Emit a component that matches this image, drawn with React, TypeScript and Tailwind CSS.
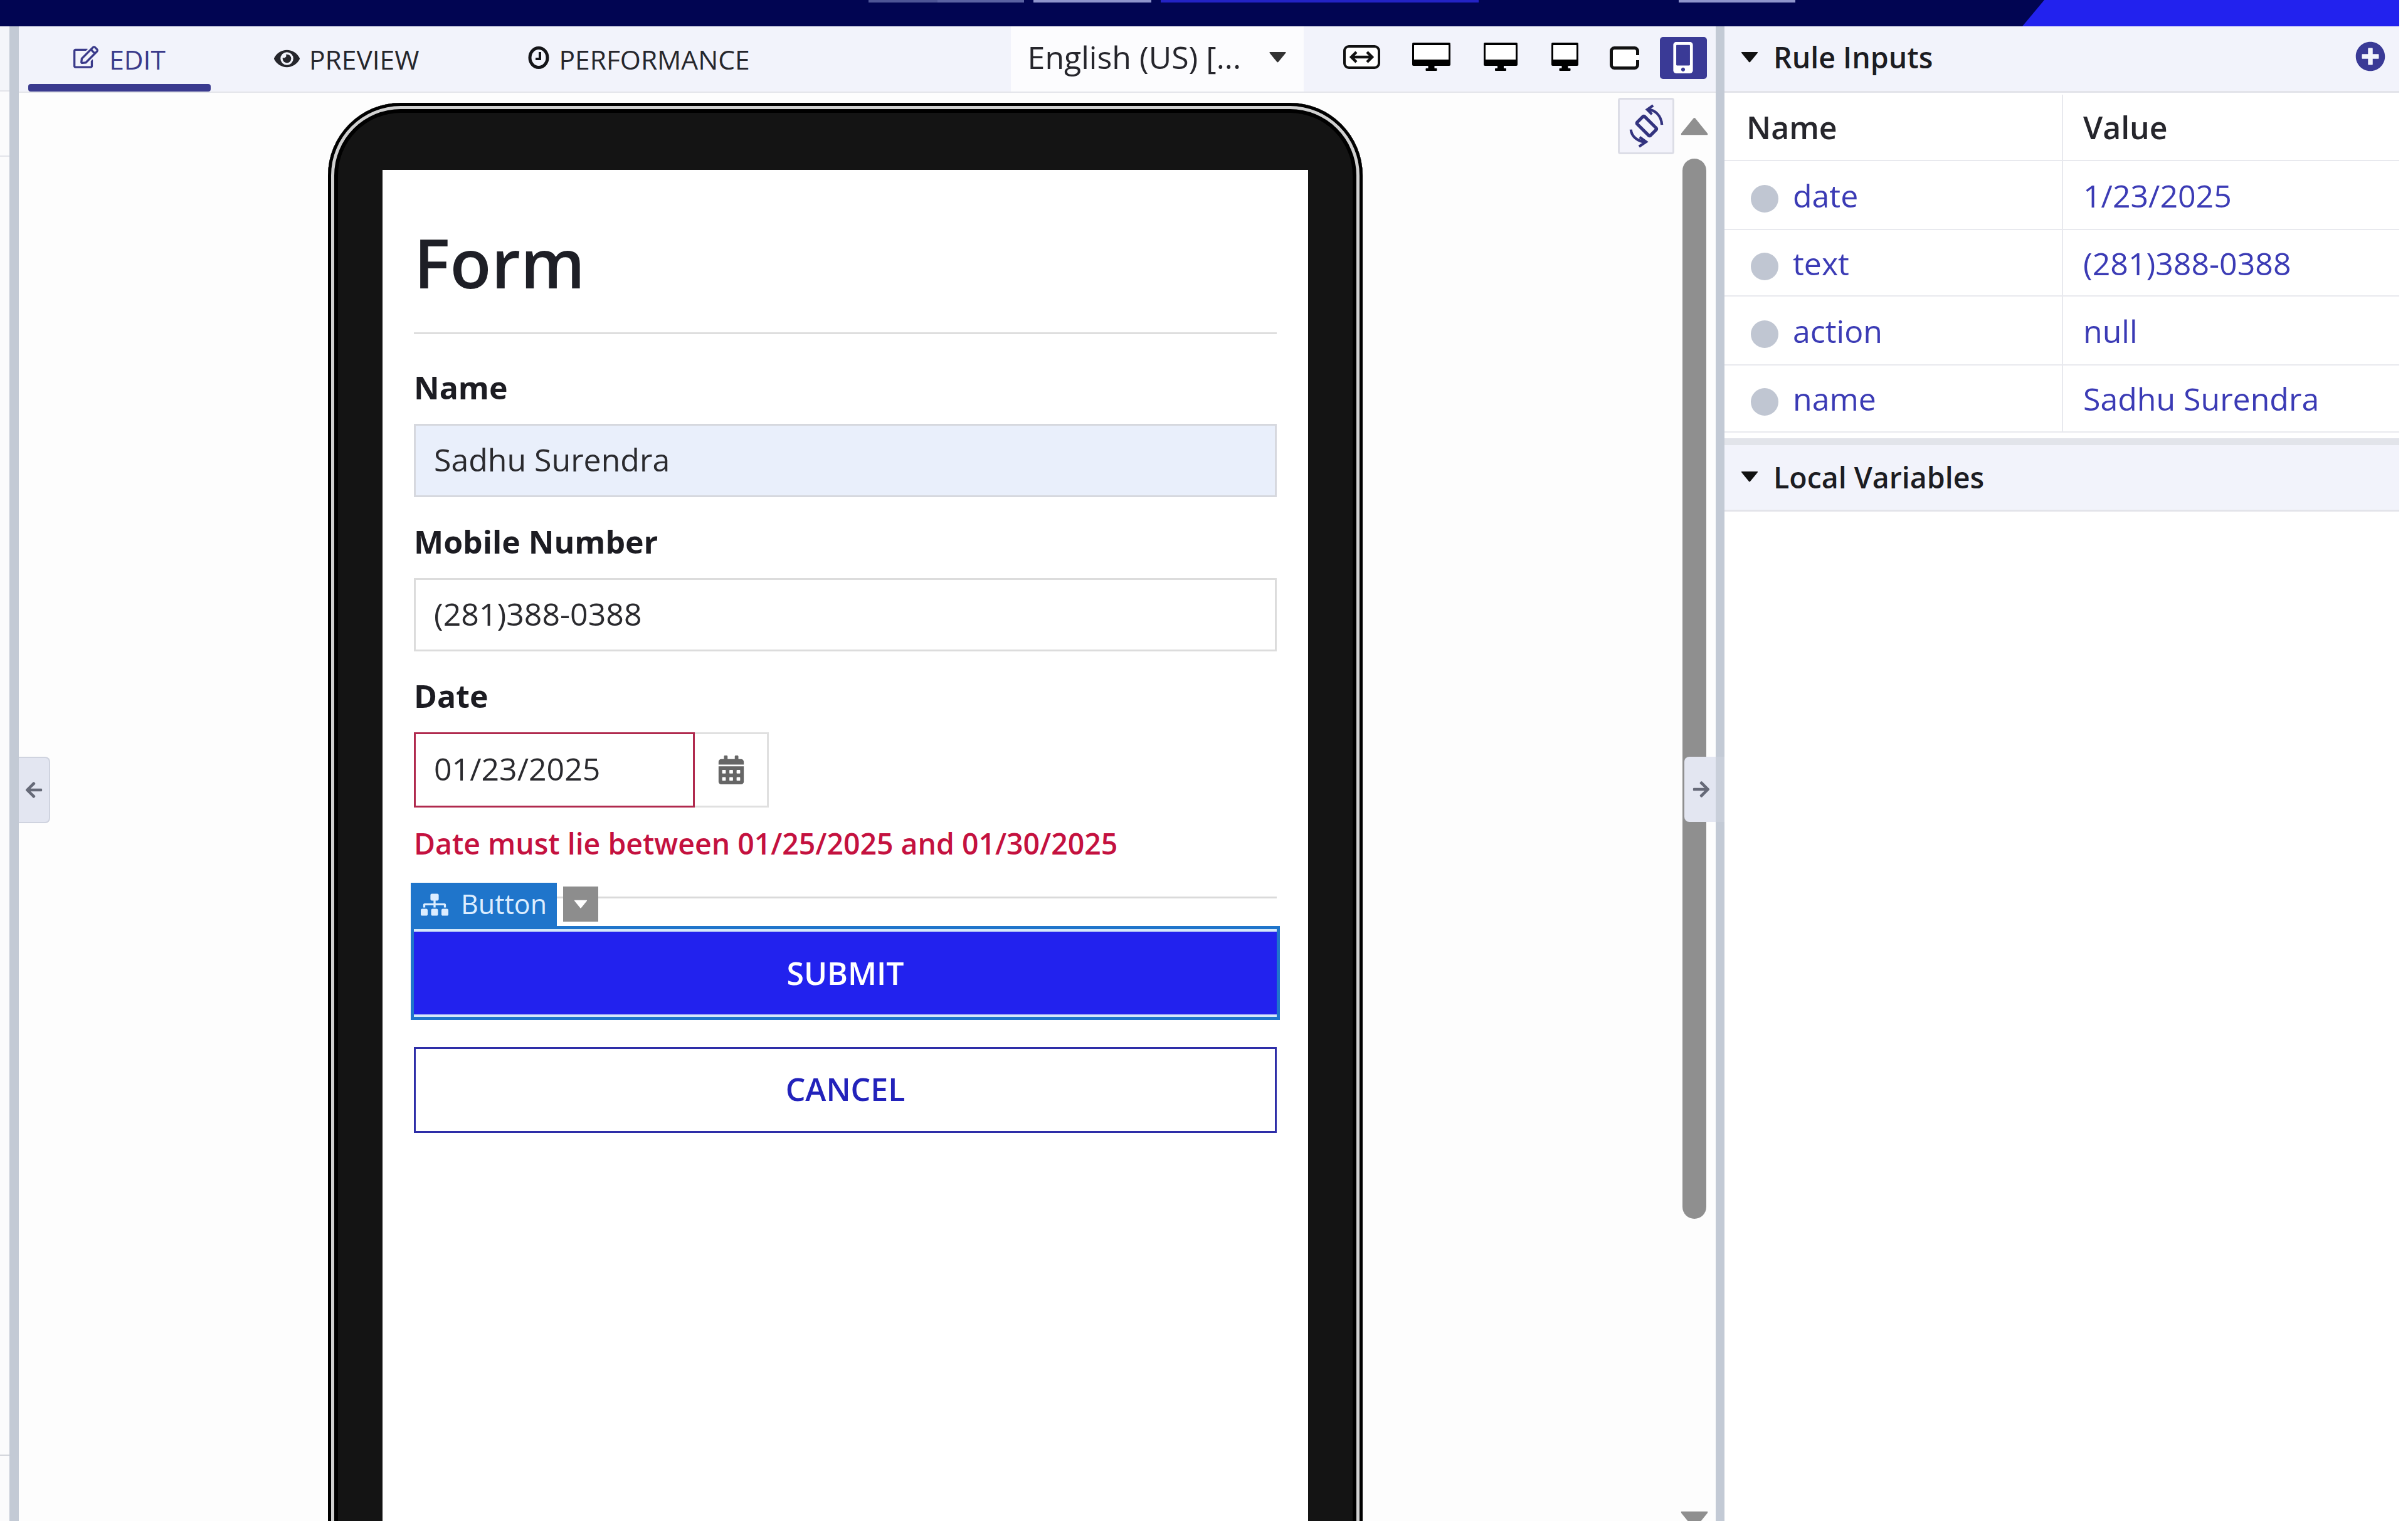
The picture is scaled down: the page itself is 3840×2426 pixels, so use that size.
import { FaArrowLeft, FaArrowRight, FaCalendarAlt, FaEye, FaMobileAlt, FaPlusCircle, FaRegEdit, FaSitemap } from "react-icons/fa";

const ruleInputs = [
	{ name: "date", value: "1/23/2025", height: "h-[110px]" },
	{ name: "text", value: "(281)388-0388", height: "h-[106px]" },
	{ name: "action", value: "null", height: "h-[110px]" },
	{ name: "name", value: "Sadhu Surendra", height: "h-[107px]" },
];

function Triangle({ className, down = true }: { className: string; down?: boolean }) {
	return (
		<svg viewBox="0 0 30 20" className={className} fill="currentColor">
			{down ? (
				<path d="M1 1 H29 Q30 1 29 3 L16 19 Q15 20 14 19 L1 3 Q0 1 1 1 Z" />
			) : (
				<path d="M1 19 H29 Q30 19 29 17 L16 1 Q15 0 14 1 L1 17 Q0 19 1 19 Z" />
			)}
		</svg>
	);
}

function Monitor({ width }: { width: number }) {
	const mid = width / 2;
	return (
		<svg viewBox={`0 0 ${width} 45`} width={width} height={45} className="-mt-[3px]">
			<rect x="1.5" y="1.5" width={width - 3} height="32" rx="3" fill="#fff" stroke="#000" strokeWidth="3" />
			<rect x="0" y="0" width={width} height="4" rx="2" fill="#000" />
			<rect x="0" y="27" width={width} height="10" rx="2" fill="#000" />
			<rect x={mid - 5} y="36" width="10" height="5" fill="#000" />
			<rect x={mid - 9} y="41" width="18" height="4" rx="1" fill="#000" />
		</svg>
	);
}

function LabelRow({ children, className = "" }: { children: string; className?: string }) {
	return <div className={`flex h-[60px] items-center text-[50px] font-bold text-[#1c1c22] ${className}`}>{children}</div>;
}

function PanelHeader({ title, className = "", children }: { title: string; className?: string; children?: React.ReactNode }) {
	return (
		<div className={`flex h-[106px] items-center border-b-[3px] border-[#e3e4ea] bg-[#f2f3fb] pr-[22px] pl-[25px] text-[#1c1c22] ${className}`}>
			<Triangle className="-mt-[6px] h-[18px] w-[30px] text-[#111]" />
			<span className="-mt-[3px] ml-[23px] text-[46.5px] font-semibold">{title}</span>
			{children}
		</div>
	);
}

export default function App() {
	return (
		<div className="flex h-[2426px] w-[3840px] flex-col overflow-hidden bg-white font-['Open_Sans',sans-serif]">
			{/* top nav, only its bottom edge is in the crop */}
			<div className="flex h-[42px] shrink-0">
				<div className="flex flex-1 items-start bg-[#010552]">
					<div className="ml-[1385px] h-[4px] w-[110px] bg-[#4d5596]" />
					<div className="h-[4px] w-[138px] bg-[#5a62a2]" />
					<div className="ml-[15px] h-[4px] w-[188px] bg-[#8f95cc]" />
					<div className="ml-[15px] h-[4px] w-[507px] bg-[#2323c4]" />
					<div className="ml-[319px] h-[4px] w-[186px] bg-[#8f95cc]" />
				</div>
				<svg viewBox="0 0 35 42" className="h-[42px] w-[35px] shrink-0 bg-[#010552]" preserveAspectRatio="none">
					<path d="M35 0 L0 42 H35 Z" fill="#2222ee" />
				</svg>
				<div className="w-[566px] bg-[#2222ee]" />
				<div className="w-[14px] bg-white" />
			</div>

			<div className="flex min-h-0 flex-1">
				<div className="flex w-[15px] shrink-0 flex-col bg-[#fbfbfc]">
					<div className="h-[104px] border-b-[2px] border-[#e3e4ea] bg-[#f4f5fa]" />
					<div className="h-[104px] border-b-[2px] border-[#e3e4ea]" />
					<div className="mt-[2070px] border-b-[2px] border-[#d4d6dc]" />
				</div>
				<div className="w-[15px] shrink-0 bg-[#c3cad5]" />

				{/* designer canvas */}
				<div className="flex w-[2706px] shrink-0 flex-col">
					<div className="flex h-[106px] shrink-0 items-stretch border-b-[2px] border-[#e4e5ea] bg-[#f2f3fb] text-[42.5px]">
						<div className="relative ml-[15px] flex w-[291px] items-center justify-center gap-[17px] pt-[6px] pb-[4px] text-[#3a3a8a]">
							<FaRegEdit className="-mt-[8px] size-[40px]" />
							<span>EDIT</span>
							<div className="absolute inset-x-0 bottom-0 h-[12px] rounded-[4px] bg-[#3a3a8f]" />
						</div>
						<div className="ml-[101px] flex items-center gap-[15px] pt-[6px] pb-[4px] text-[#26262c]">
							<FaEye className="-mt-[4px] size-[41px]" />
							<span>PREVIEW</span>
						</div>
						<div className="ml-[174px] flex items-center gap-[15px] pt-[6px] pb-[4px] text-[#26262c]">
							<svg viewBox="0 0 34 36" width={34} height={36} className="-mt-[6px]" fill="none" stroke="#141418">
								<ellipse cx="17" cy="18" rx="14" ry="15.5" strokeWidth="5" />
								<path d="M19 9 V20 H12" strokeWidth="4" />
							</svg>
							<span>PERFORMANCE</span>
						</div>
						<div className="ml-[416px] flex w-[467px] items-center bg-[#fcfcfe] pb-[6px] pl-[27px] text-[50px] text-[#26262c]">
							<span>English (US) [...</span>
							<Triangle className="ml-[44px] h-[18px] w-[29px] text-[#333]" />
						</div>
						<div className="flex items-center pb-[4px]">
							<svg viewBox="0 0 59 38" width={59} height={38} className="ml-[63px] -mt-[3px]">
								<rect x="2" y="2" width="55" height="34" rx="7" fill="#fff" stroke="#111" strokeWidth="4" />
								<path d="M14 19 H45 M21 11 L13 19 L21 27 M38 11 L46 19 L38 27" fill="none" stroke="#111" strokeWidth="4.5" />
							</svg>
							<div className="ml-[51px]"><Monitor width={61} /></div>
							<div className="ml-[53px]"><Monitor width={54} /></div>
							<div className="ml-[54px]"><Monitor width={43} /></div>
							<svg viewBox="0 0 47 37" width={47} height={37} className="ml-[50px]">
								<rect x="2.5" y="2.5" width="42" height="32" rx="5" fill="#fff" stroke="#111" strokeWidth="5" />
								<rect x="42" y="14" width="5" height="8" fill="#fff" />
							</svg>
							<div className="ml-[33px] flex h-[67px] w-[75px] items-center justify-center rounded-[5px] bg-[#3a3a96] text-white">
								<FaMobileAlt className="size-[50px]" />
							</div>
						</div>
					</div>

					<div className="relative flex min-h-0 flex-1 bg-[#fdfdfd]">
						<div className="min-w-0 flex-1 pt-[16px] pl-[493px]">
							{/* device frame */}
							<div className="h-[2400px] w-[1650px] rounded-t-[116px] bg-[#141414] px-[87px] pt-[107px] shadow-[inset_0_0_0_5px_#000,inset_0_0_0_10px_#d0d0d0,inset_0_0_0_16px_#000]">
								<div className="h-full bg-white px-[50px] text-[#2a2a2e]">
									<div className="h-[262px] border-b-[3px] border-[#dedede] pt-[94px] text-[108px] leading-none font-semibold text-[#1e1f26]">
										Form
									</div>
									<LabelRow className="mt-[55px] mb-[28px]">Name</LabelRow>
									<div className="flex h-[117px] items-center border-[3px] border-[#d6d8de] bg-[#e9effb] pb-[3px] pl-[29px] text-[50px]">
										Sadhu Surendra
									</div>
									<LabelRow className="mt-[41px] mb-[28px]">Mobile Number</LabelRow>
									<div className="flex h-[117px] items-center border-[3px] border-[#dcdcdc] bg-white pb-[3px] pl-[29px] text-[50px]">
										(281)388-0388
									</div>
									<LabelRow className="mt-[41px] mb-[28px]">Date</LabelRow>
									<div className="flex h-[120px]">
										<div className="flex w-[448px] items-center border-[3px] border-[#b02a4e] pb-[3px] pl-[29px] text-[50px]">
											01/23/2025
										</div>
										<div className="flex w-[118px] items-center justify-center border-y-[3px] border-r-[3px] border-[#e0e0e0] text-[#666]">
											<FaCalendarAlt className="size-[46px]" />
										</div>
									</div>
									<div className="mt-[28px] flex h-[60px] items-center text-[46.4px] font-semibold text-[#c4113f]">
										Date must lie between 01/25/2025 and 01/30/2025
									</div>

									<div className="mt-[32px] -ml-[5px] flex h-[69px] items-start">
										<div className="flex h-full w-[233px] items-center gap-[20px] bg-[#1f75cb] pl-[16px] text-[43px] text-[#dcedff]">
											<FaSitemap className="size-[44px]" />
											<span>Button</span>
										</div>
										<div className="mt-[22px] h-[3px] w-[10px] bg-[#dadada]" />
										<div className="mt-[6px] flex h-[56px] w-[56px] items-center justify-center bg-[#8d8d8d]">
											<Triangle className="h-[14px] w-[24px] text-white" />
										</div>
										<div className="mt-[22px] h-[3px] flex-1 bg-[#dadada]" />
									</div>

									<div className="-mx-[5px] h-[150px] border-[5px] border-[#1f75cb]">
										<div className="flex h-full items-center justify-center border-y-[4px] border-[#d5e8f9] bg-[#2222ee] text-[50px] font-semibold text-white">
											SUBMIT
										</div>
									</div>
									<div className="mt-[43px] flex h-[137px] items-center justify-center border-[3px] border-[#2e2ea8] bg-white pb-[2px] text-[50px] font-semibold text-[#2222bb]">
										CANCEL
									</div>
								</div>
							</div>
						</div>

						{/* scrollbar */}
						<div className="mr-[12px] flex w-[44px] shrink-0 flex-col items-center pt-[39px] text-[#8f8f8f]">
							<Triangle down={false} className="h-[30px] w-[44px]" />
							<div className="mt-[36px] h-[1691px] w-[38px] shrink-0 rounded-[19px] bg-[#8f8f8f]" />
							<div className="flex-1" />
							<Triangle className="-mb-[13px] h-[30px] w-[44px] shrink-0" />
						</div>

						<div className="absolute top-[8px] left-[2550px] flex size-[90px] items-center justify-center rounded-[4px] border-[3px] border-[#dcdde6] bg-[#f3f3fb]">
							<svg viewBox="0 0 90 92" className="size-[86px]" fill="none" stroke="#33337f">
								<rect x="37" y="30" width="18" height="32" rx="2" transform="rotate(-45 46 46)" strokeWidth="5.5" />
								<path d="M48 18 C60 18 71 28 72 44 M57 11 L47 18 L55 26 M45 74 C30 72 20 64 19 52 M34 65 L45 73 L33 81" strokeWidth="4.5" />
							</svg>
						</div>

						<div className="absolute top-[1059px] left-0 flex h-[106px] w-[50px] items-center justify-center rounded-r-[8px] border-y-[2px] border-r-[2px] border-[#cfd3df] bg-[#e3e6f1] text-[#666a78]">
							<FaArrowLeft className="size-[30px]" />
						</div>
						<div className="absolute top-[1059px] right-0 flex h-[104px] w-[50px] items-center rounded-l-[8px] bg-[#e3e6f1] pl-[12px] text-[#666a78]">
							<FaArrowRight className="size-[30px]" />
							<div className="absolute top-0 left-full h-full w-[14px] bg-[#e3e6f1]/20" />
						</div>
					</div>
				</div>

				<div className="w-[14px] shrink-0 bg-[#c3cad5]" />

				{/* rule inputs panel */}
				<div className="flex w-[1076px] shrink-0 flex-col bg-white">
					<PanelHeader title="Rule Inputs">
						<FaPlusCircle className="-mt-[8px] ml-auto size-[48px] text-[#3a3a96]" />
					</PanelHeader>
					<div className="flex h-[109px] items-stretch border-b-[2px] border-[#e8e9ee] pt-[3px] text-[50px] font-semibold text-[#26262c]">
						<div className="flex w-[540px] items-center border-r-[2px] border-[#e8e9ee] pl-[35px]">Name</div>
						<div className="flex items-center pl-[32px]">Value</div>
					</div>
					{ruleInputs.map((input) => (
						<div key={input.name} className={`flex ${input.height} items-stretch border-b-[2px] border-[#e8e9ee] text-[50px] text-[#3b3bb5]`}>
							<div className="flex w-[540px] items-center border-r-[2px] border-[#e8e9ee] pt-[2px] pl-[42px]">
								<div className="mt-[9px] size-[44px] rounded-full bg-[#c0c6d2]" />
								<span className="ml-[23px]">{input.name}</span>
							</div>
							<div className="flex items-center pt-[2px] pl-[32px]">{input.value}</div>
						</div>
					))}
					<div className="mt-[9px] h-[11px] bg-[#e2e4ea]" />
					<PanelHeader title="Local Variables" className="pt-[3px]" />
				</div>
				<div className="w-[14px] shrink-0 bg-white" />
			</div>
		</div>
	);
}
